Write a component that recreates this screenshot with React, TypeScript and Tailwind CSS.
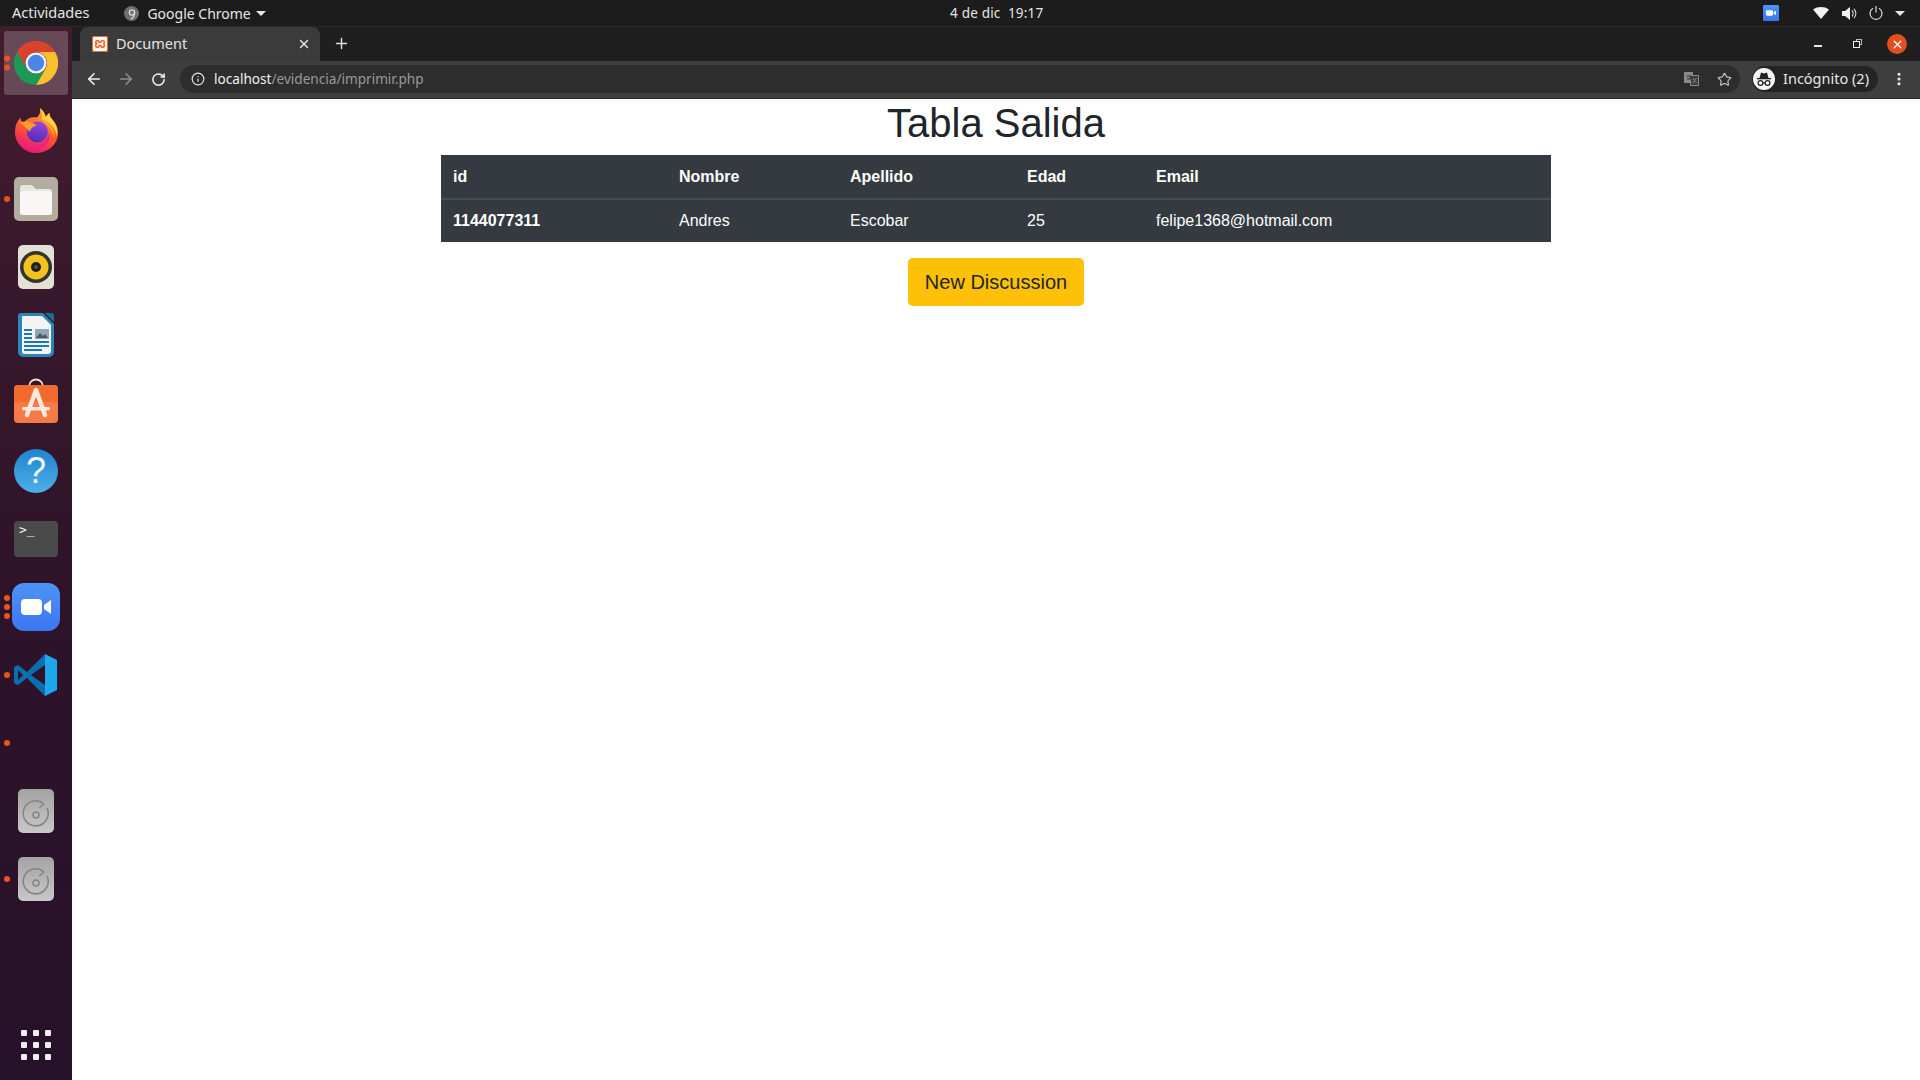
import { ArrowLeft, ArrowRight, Info, MoreVertical, Plus, RotateCw, Star, X } from 'lucide-react'
import { SiXampp } from 'react-icons/si'
import type { ReactNode } from 'react'

const uiFont = 'font-["Noto_Sans","Open_Sans",sans-serif]'

function ChromeLogo({ size }: { size: number }) {
  return (
    <svg width={size} height={size} viewBox="0 0 44 44">
      <path d="M2.9 11A22 22 0 0 1 41.1 11L22 11A11 11 0 0 0 12.5 27.5Z" fill="#d9422f" />
      <path d="M41.1 11A22 22 0 0 1 22 44L31.5 27.5A11 11 0 0 0 22 11Z" fill="#fbc02d" />
      <path d="M22 44A22 22 0 0 1 2.9 11L12.5 27.5A11 11 0 0 0 31.5 27.5Z" fill="#1a9a55" />
      <circle cx="22" cy="22" r="10.5" fill="#f2f2f2" />
      <circle cx="22" cy="22" r="8.2" fill="#4a86e8" />
    </svg>
  )
}

function FirefoxLogo() {
  return (
    <svg className="-translate-y-[1px]" width="44" height="46" viewBox="0 0 46 48" preserveAspectRatio="none">
      <defs>
        <linearGradient id="ffBody" x1="0.7" y1="0" x2="0.3" y2="1">
          <stop offset="0" stopColor="#ffb02e" />
          <stop offset="0.5" stopColor="#ff5a2b" />
          <stop offset="1" stopColor="#e3167f" />
        </linearGradient>
        <linearGradient id="ffGlobe" x1="0.7" y1="0" x2="0.3" y2="1">
          <stop offset="0" stopColor="#9a45dd" />
          <stop offset="1" stopColor="#4f2bb8" />
        </linearGradient>
      </defs>
      <path d="M1 26C1 20 3 15 7 11C7 14 8 16 10 17C13 12 18 10 24 11C27 8 28 5 27 1C31 4 32 7 33 10C35 8 36 7 37 6C37 9 38 11 40 13C44 17 46 21 46 27C46 39 35 48 23 48C11 48 1 38 1 26Z" fill="url(#ffBody)" />
      <path d="M27 1C31 4 33 8 33 11C35 9 36 7 37 6C37 9 38 11 40 13C44 18 46 23 45 30C43 21 37 15 29 13C30 8 29 4 27 1Z" fill="#ffd23f" />
      <path d="M30 13C38 16 43 23 42 33C40 25 36 19 30 16Z" fill="#ffa62e" />
      <circle cx="24.5" cy="26" r="11" fill="url(#ffGlobe)" />
      <path d="M6 16C12 14 19 15 24 19C20 20 18 22 16 26C14 22 10 20 6 16Z" fill="#ff9a2e" />
      <path d="M7 29C10 36 17 40 24 39C31 38 35 33 37 27C39 36 32 44 23 44C15 44 9 37 7 29Z" fill="#f0247c" />
    </svg>
  )
}

function FilesIcon() {
  return (
    <svg width="44" height="44" viewBox="0 0 44 44">
      <rect width="44" height="44" rx="5" fill="#b2ad9e" />
      <path d="M6 11a3 3 0 0 1 3-3h9l4 4h13a3 3 0 0 1 3 3v20a3 3 0 0 1-3 3H9a3 3 0 0 1-3-3Z" fill="#e9e6df" />
      <path d="M6 17a3 3 0 0 1 3-3h26a3 3 0 0 1 3 3v18a3 3 0 0 1-3 3H9a3 3 0 0 1-3-3Z" fill="#f8f7f5" />
    </svg>
  )
}

function RhythmboxIcon() {
  return (
    <svg width="36" height="44" viewBox="0 0 36 44">
      <rect width="36" height="44" rx="5" fill="#e3e0d6" />
      <circle cx="18" cy="22" r="16" fill="#35332e" />
      <circle cx="18" cy="22" r="12.5" fill="#f2c21f" />
      <circle cx="18" cy="22" r="5" fill="#1f1e1b" />
      <circle cx="18" cy="22" r="2" fill="#55524a" />
    </svg>
  )
}

function WriterIcon() {
  return (
    <svg width="36" height="44" viewBox="0 0 36 44">
      <path d="M3 0H25L36 11V39a5 5 0 0 1-5 5H5a5 5 0 0 1-5-5V3a3 3 0 0 1 3-3Z" fill="#2a85b8" />
      <path d="M4 3H24L33 12V38a3 3 0 0 1-3 3H6a2 2 0 0 1-2-2Z" fill="#f4f4f4" />
      <path d="M27 0H33a3 3 0 0 1 3 3V9Z" fill="#1a6e9f" />
      <rect x="6" y="16" width="8" height="2" fill="#1a7ab5" />
      <rect x="6" y="20" width="8" height="2" fill="#1a7ab5" />
      <rect x="6" y="24" width="8" height="2" fill="#1a7ab5" />
      <rect x="17" y="16" width="14" height="10" fill="#8ea6b5" />
      <path d="M18 25l4-5 3 3 2-2 3 4Z" fill="#4e5a60" />
      <rect x="6" y="28" width="25" height="2" fill="#1a7ab5" />
      <rect x="6" y="32" width="25" height="2" fill="#1a7ab5" />
      <rect x="6" y="36" width="18" height="2" fill="#1a7ab5" />
    </svg>
  )
}

function SoftwareIcon() {
  return (
    <svg className="-translate-y-[2px] overflow-visible" width="44" height="44" viewBox="0 0 44 44">
      <path d="M15 8C15 -2 29 -2 29 8" fill="none" stroke="#f0dfc2" strokeWidth="1.8" />
      <rect y="6" width="44" height="38" rx="4" fill="#f57a45" />
      <path d="M4 6H40a4 4 0 0 1 4 4V23H0V10a4 4 0 0 1 4-4Z" fill="#f16a2e" />
      <path d="M22 11L13 36M22 11L31 36" stroke="#fbe9de" strokeWidth="4.5" strokeLinecap="round" fill="none" />
      <rect x="8" y="28" width="28" height="3.4" rx="1.7" fill="#fbe9de" />
    </svg>
  )
}

function HelpIcon() {
  return (
    <div className="flex h-[44px] w-[44px] items-center justify-center rounded-full bg-gradient-to-b from-[#1f83cf] to-[#4cb0e8] font-['Liberation_Sans',sans-serif] text-[36px] leading-none text-[#f2f6fa]">
      ?
    </div>
  )
}

function TerminalIcon() {
  return (
    <div className="flex h-[36px] w-[44px] flex-col rounded-[4px] bg-[#4a4a4a] px-[5px] py-[1px] font-['DejaVu_Sans_Mono',monospace] text-[13px] leading-[16px] text-[#f0f0f0]">
      &gt;_
    </div>
  )
}

function ZoomIcon({ size, radius }: { size: number; radius: number }) {
  return (
    <svg width={size} height={size} viewBox="0 0 48 48">
      <defs>
        <linearGradient id={`zm${size}`} x1="0" y1="0" x2="0" y2="1">
          <stop offset="0" stopColor="#4f93f7" />
          <stop offset="1" stopColor="#3a76f0" />
        </linearGradient>
      </defs>
      <rect width="48" height="48" rx={radius} fill={`url(#zm${size})`} />
      <rect x="9" y="16" width="21" height="16" rx="4" fill="#fff" />
      <path d="M32 22L39 17V31L32 26Z" fill="#fff" />
    </svg>
  )
}

function VscodeIcon() {
  return (
    <svg width="44" height="44" viewBox="0 0 44 44">
      <path d="M31 1L13 19L4 12L0 14V30L4 32L13 25L31 43Z M31 12V32L17 22Z M4 17L9 22L4 27Z" fill="#0a6fb0" fillRule="evenodd" />
      <path d="M31 1L43 7V37L31 43Z" fill="#1fa7ee" />
    </svg>
  )
}

function DiscIcon() {
  return (
    <svg width="36" height="44" viewBox="0 0 36 44">
      <defs>
        <linearGradient id="disc" x1="0" y1="0" x2="0" y2="1">
          <stop offset="0" stopColor="#a3a3a3" />
          <stop offset="1" stopColor="#c8c8c8" />
        </linearGradient>
      </defs>
      <rect width="36" height="44" rx="5" fill="url(#disc)" />
      <path d="M26 15A12.5 12.5 0 1 0 29 19" fill="none" stroke="#858585" strokeWidth="1.6" />
      <path d="M26 15L21 19" stroke="#858585" strokeWidth="1.6" />
      <circle cx="18" cy="26" r="3" fill="none" stroke="#858585" strokeWidth="1.6" />
    </svg>
  )
}

function DockItem({ dots = 0, active, children }: { dots?: number; active?: boolean; children?: ReactNode }) {
  return (
    <div className="relative flex h-[68px] w-full items-center justify-center">
      {active && <div className="absolute inset-x-[4px] inset-y-[2px] rounded-[3px] bg-white/20" />}
      {dots > 0 && (
        <div className="absolute left-[4px] top-1/2 flex -translate-y-1/2 flex-col gap-[3px]">
          {Array.from({ length: dots }).map((_, i) => (
            <span key={i} className="block h-[6px] w-[6px] rounded-full bg-[#e95420]" />
          ))}
        </div>
      )}
      <div className="relative flex items-center justify-center">{children}</div>
    </div>
  )
}

function Dock() {
  return (
    <aside className="flex w-[72px] shrink-0 flex-col bg-gradient-to-b from-[#421c2e] via-[#2f1429] to-[#26112a] pt-[2px]">
      <DockItem dots={2} active>
        <ChromeLogo size={44} />
      </DockItem>
      <DockItem>
        <FirefoxLogo />
      </DockItem>
      <DockItem dots={1}>
        <FilesIcon />
      </DockItem>
      <DockItem>
        <RhythmboxIcon />
      </DockItem>
      <DockItem>
        <WriterIcon />
      </DockItem>
      <DockItem>
        <SoftwareIcon />
      </DockItem>
      <DockItem>
        <HelpIcon />
      </DockItem>
      <DockItem>
        <TerminalIcon />
      </DockItem>
      <DockItem dots={3}>
        <ZoomIcon size={48} radius={12} />
      </DockItem>
      <DockItem dots={1}>
        <VscodeIcon />
      </DockItem>
      <DockItem dots={1} />
      <DockItem>
        <DiscIcon />
      </DockItem>
      <DockItem dots={1}>
        <DiscIcon />
      </DockItem>
      <div className="mt-auto mb-[20px] grid grid-cols-3 justify-center gap-[6px] self-center">
        {Array.from({ length: 9 }).map((_, i) => (
          <span key={i} className="block h-[6px] w-[6px] rounded-[1px] bg-[#eeeeee]" />
        ))}
      </div>
    </aside>
  )
}

function TopBar() {
  return (
    <header className={`grid h-[27px] shrink-0 grid-cols-[950px_auto_1fr] items-center border-b border-[#2a2a2a] bg-[#1c1c1c] text-[14px] text-[#e6e6e6] ${uiFont}`}>
      <div className="flex items-center pl-[12px]">
        <span className="text-[14.5px]">Actividades</span>
        <svg className="ml-[35px]" width="15" height="15" viewBox="0 0 15 15">
          <circle cx="7.5" cy="7.5" r="7.5" fill="#6f6f6f" />
          <circle cx="8" cy="6.5" r="2.6" fill="none" stroke="#d8d8d8" strokeWidth="1.4" />
          <path d="M10.5 6.5C10.5 10 9 12 7 13" fill="none" stroke="#d8d8d8" strokeWidth="1.4" />
        </svg>
        <span className="ml-[8px]">Google Chrome</span>
        <span className="ml-[5px] h-0 w-0 border-x-[5px] border-t-[5px] border-x-transparent border-t-[#e6e6e6]" />
      </div>
      <div className="text-[13.5px] tracking-[0.2px] whitespace-pre">4 de dic  19:17</div>
      <div className="flex items-center justify-end">
        <ZoomIcon size={16} radius={4} />
        <svg className="ml-[34px]" width="16" height="12" viewBox="0 0 16 12">
          <path d="M0 2.5C4.5 -0.8 11.5 -0.8 16 2.5L8 12Z" fill="#f2f2f2" />
        </svg>
        <svg className="ml-[13px]" width="15" height="13" viewBox="0 0 15 13">
          <path d="M0 4H3L8 0V13L3 9H0Z" fill="#f2f2f2" />
          <path d="M10 3.5C11.5 5 11.5 8 10 9.5M12 1.8C14.5 4.5 14.5 8.5 12 11.2" fill="none" stroke="#d8d8d8" strokeWidth="1.1" />
        </svg>
        <svg className="ml-[12px]" width="14" height="14" viewBox="0 0 14 14">
          <path d="M4 2.2A6 6 0 1 0 10 2.2M7 0V6.5" fill="none" stroke="#e6e6e6" strokeWidth="1.1" />
        </svg>
        <span className="mr-[15px] ml-[12px] h-0 w-0 border-x-[5px] border-t-[5px] border-x-transparent border-t-[#e6e6e6]" />
      </div>
    </header>
  )
}

function TabStrip() {
  return (
    <div className={`flex h-[34px] shrink-0 items-end bg-[#1f1f1f] pl-[8px] ${uiFont}`}>
      <div className="flex h-[34px] w-[240px] items-center rounded-t-[8px] bg-[#3b3b3b] pr-[9px] pb-[1px] pl-[12px]">
        <div className="flex h-[16px] w-[16px] items-center justify-center rounded-[1px] bg-[#ec6a2c] text-white">
          <SiXampp size={14} />
        </div>
        <span className="ml-[8px] flex-1 text-[14.5px] text-[#e4e4e4]">Document</span>
        <X size={14} strokeWidth={2.5} className="text-[#e8e8e8]" />
      </div>
      <Plus size={17} strokeWidth={2} className="mb-[9px] ml-[13px] text-[#e0e0e0]" />
      <div className="ml-auto flex h-full items-center">
        <span className="mt-[4px] block h-[1.5px] w-[8px] bg-[#e6e6e6]" />
        <div className="relative ml-[31px] h-[7px] w-[7px]">
          <span className="absolute top-[-2px] right-[-2px] block h-[6px] w-[6px] border border-[#bbbbbb]" />
          <span className="absolute inset-0 block border border-[#eeeeee] bg-[#1f1f1f]" />
        </div>
        <div className="mr-[13px] ml-[27px] flex h-[20px] w-[20px] items-center justify-center rounded-full bg-[#e2501d] text-white">
          <X size={13} strokeWidth={2.4} />
        </div>
      </div>
    </div>
  )
}

function TranslateIcon() {
  return (
    <svg width="15" height="14" viewBox="0 0 15 14">
      <rect x="0.5" y="0.5" width="8" height="10" fill="#8a8a8a" stroke="#8a8a8a" />
      <rect x="6.5" y="3.5" width="8" height="10" fill="#3b3b3b" stroke="#8a8a8a" />
      <path d="M2.5 4H6.5V7H3" fill="none" stroke="#2b2b2b" strokeWidth="1" />
      <path d="M8.5 6L12.5 11M12.5 6L8.5 11" stroke="#8a8a8a" strokeWidth="1" />
    </svg>
  )
}

function IncognitoIcon() {
  return (
    <svg width="22" height="22" viewBox="0 0 22 22">
      <circle cx="11" cy="11" r="11" fill="#f5f5f5" />
      <path d="M6.5 10L8 4.5L11 5.5L14 4.5L15.5 10Z" fill="#222" />
      <rect x="4" y="10" width="14" height="1.3" fill="#222" />
      <circle cx="7.5" cy="15" r="2.4" fill="none" stroke="#222" strokeWidth="1.2" />
      <circle cx="14.5" cy="15" r="2.4" fill="none" stroke="#222" strokeWidth="1.2" />
      <path d="M9.9 15H12.1" stroke="#222" strokeWidth="1.2" />
    </svg>
  )
}

function Toolbar() {
  return (
    <div className={`flex h-[38px] shrink-0 items-center border-b border-[#262626] bg-[#3e3e3e] pb-[1px] ${uiFont}`}>
      <ArrowLeft size={18} strokeWidth={2.2} className="ml-[13px] text-[#f0f0f0]" />
      <ArrowRight size={18} strokeWidth={2.2} className="ml-[14px] text-[#8e8e8e]" />
      <RotateCw size={15} strokeWidth={2.4} className="ml-[16px] text-[#f0f0f0]" />
      <div className="ml-[14px] flex h-[28px] flex-1 items-center rounded-full bg-[#2d2d2d] pr-[8px] pl-[11px]">
        <Info size={14} strokeWidth={2} className="text-[#e6e6e6]" />
        <span className="ml-[9px] flex-1 text-[13.6px] text-[#9a9a9a]">
          <span className="text-[#f0f0f0]">localhost</span>/evidencia/imprimir.php
        </span>
        <TranslateIcon />
        <Star size={15} strokeWidth={1.8} className="ml-[18px] text-[#c8c8c8]" />
      </div>
      <div className="ml-[12px] flex h-[26px] w-[126px] items-center rounded-full bg-[#242424] pl-[1px] text-[14.5px] text-[#e6e6e6]">
        <IncognitoIcon />
        <span className="ml-[8px]">Incógnito (2)</span>
      </div>
      <MoreVertical size={16} strokeWidth={2.6} className="mr-[13px] ml-[13px] text-[#eeeeee]" />
    </div>
  )
}

function SalidaPage() {
  return (
    <main className="flex-1 bg-white font-['Liberation_Sans',sans-serif] text-[#212529]">
      <div className="mx-auto w-[1110px]">
        <h1 className="mb-[8px] text-center text-[40px] leading-[48px] font-normal">Tabla Salida</h1>
        <table className="w-full table-fixed bg-[#343a40] text-left text-[16px] leading-[24px] text-white">
          <thead>
            <tr className="border-b-2 border-[#454d55]">
              <th className="w-[226px] px-[12px] pt-[10px] pb-[9px] font-bold">id</th>
              <th className="w-[171px] px-[12px] pt-[10px] pb-[9px] font-bold">Nombre</th>
              <th className="w-[177px] px-[12px] pt-[10px] pb-[9px] font-bold">Apellido</th>
              <th className="w-[129px] px-[12px] pt-[10px] pb-[9px] font-bold">Edad</th>
              <th className="px-[12px] pt-[10px] pb-[9px] font-bold">Email</th>
            </tr>
          </thead>
          <tbody>
            <tr>
              <th className="px-[12px] py-[9px] font-bold">1144077311</th>
              <td className="px-[12px] py-[9px]">Andres</td>
              <td className="px-[12px] py-[9px]">Escobar</td>
              <td className="px-[12px] py-[9px]">25</td>
              <td className="px-[12px] py-[9px]">felipe1368@hotmail.com</td>
            </tr>
          </tbody>
        </table>
        <div className="mt-[16px] flex justify-center">
          <button className="h-[48px] w-[176px] rounded-[4.8px] bg-[#ffc107] text-[20px] text-[#212529]">New Discussion</button>
        </div>
      </div>
    </main>
  )
}

export default function App() {
  return (
    <div className="flex h-[1080px] w-[1920px] flex-col overflow-hidden">
      <TopBar />
      <div className="flex min-h-0 flex-1">
        <Dock />
        <div className="flex min-w-0 flex-1 flex-col">
          <TabStrip />
          <Toolbar />
          <SalidaPage />
        </div>
      </div>
    </div>
  )
}
